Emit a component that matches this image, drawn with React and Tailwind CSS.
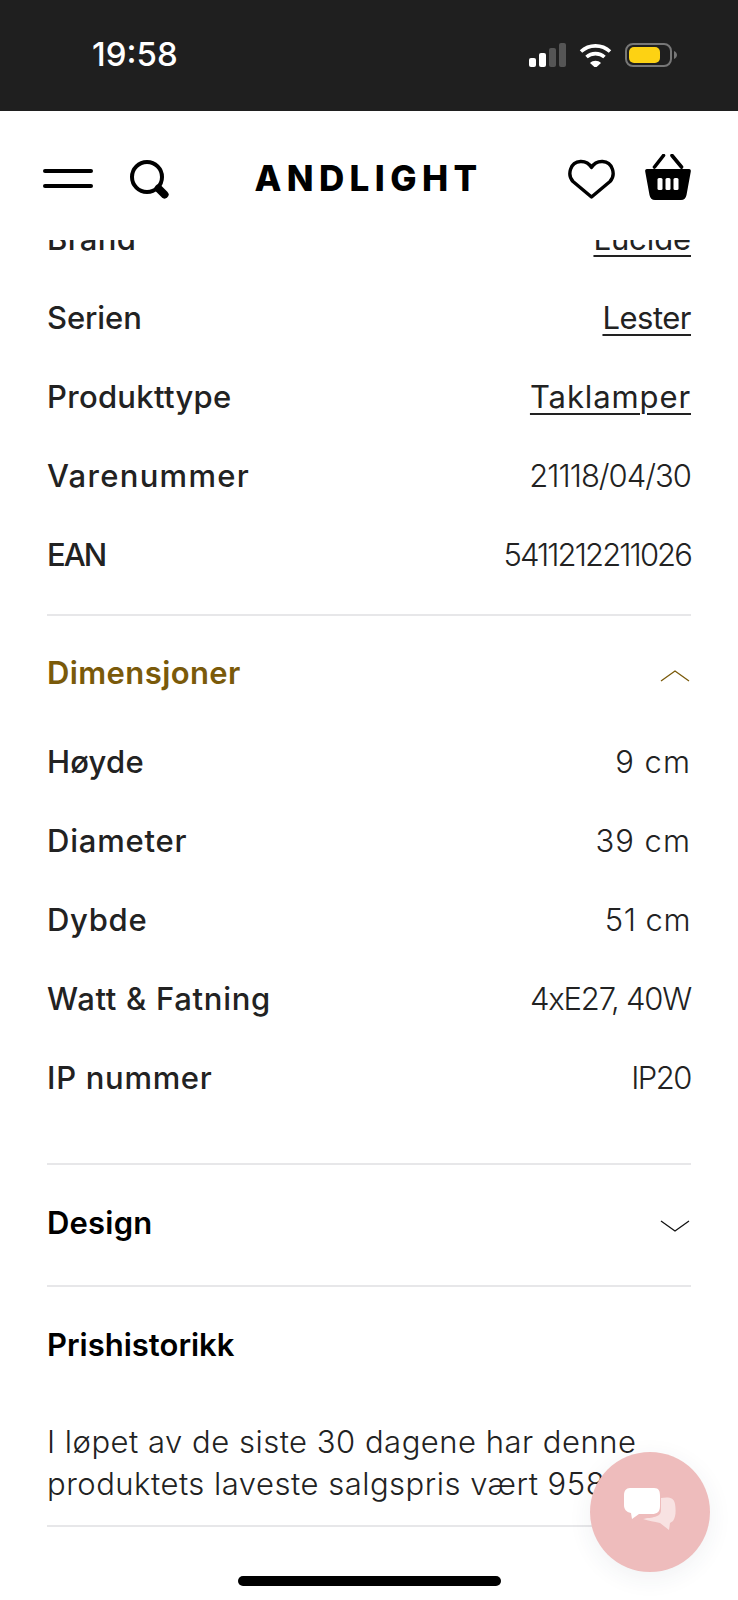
const font = { fontFamily: "Inter, 'Liberation Sans', sans-serif" };

const productRows = [
  { label: "Brand", value: "Lucide", link: "tracking-[-0.1px]", labelTrack: "tracking-[0.3px]" },
  { label: "Serien", value: "Lester", link: "tracking-[-0.5px]", labelTrack: "tracking-[-0.1px]" },
  { label: "Produkttype", value: "Taklamper", link: "tracking-[0.9px]", labelTrack: "tracking-[0.3px]" },
  { label: "Varenummer", value: "21118/04/30", tight: "tracking-[-1px]", labelTrack: "tracking-[1.3px]" },
  { label: "EAN", value: "5411212211026", tight: "tracking-[-1.9px]", labelTrack: "tracking-[-2px]" },
];

const dimensionRows = [
  { label: "Høyde", value: "9 cm", tight: "tracking-[1px]", labelTrack: "tracking-[0.2px]" },
  { label: "Diameter", value: "39 cm", tight: "tracking-[1px]", labelTrack: "tracking-[0.8px]" },
  { label: "Dybde", value: "51 cm", tight: "tracking-[0.5px]", labelTrack: "tracking-[0.7px]" },
  { label: "Watt & Fatning", value: "4xE27, 40W", tight: "tracking-[-1.2px]", labelTrack: "tracking-[0.7px]" },
  { label: "IP nummer", value: "IP20", tight: "tracking-[-1.5px]", labelTrack: "tracking-[0.7px]" },
];

function Row({ label, value, link, tight, labelTrack }) {
  return (
    <div className="flex h-[79px] items-center justify-between text-[31px] text-[#222222]">
      <span className={`font-medium ${labelTrack}`}>{label}</span>
      {link ? (
        <span className={`font-normal underline decoration-2 underline-offset-[5px] ${link}`}>{value}</span>
      ) : (
        <span className={`font-light ${tight}`}>{value}</span>
      )}
    </div>
  );
}

function Chevron({ up, color }) {
  return (
    <svg className="mt-[5px]" width="32" height="16" viewBox="0 0 32 16" fill="none" stroke={color} strokeWidth="1.3">
      <path d={up ? "M2 13 L16 3 L30 13" : "M2 3 L16 13 L30 3"} />
    </svg>
  );
}

function StatusBar() {
  return (
    <div className="flex h-[111px] items-center justify-between bg-[#1f1f1f] pb-[2px] pl-[92px] pr-[61px]">
      <span className="text-[33px] font-medium leading-none text-white">19:58</span>
      <div className="flex items-center gap-[13px]">
        <svg width="37" height="24" viewBox="0 0 37 24">
          <rect x="0" y="15" width="7" height="9" rx="2" fill="#fff" />
          <rect x="10" y="10" width="7" height="14" rx="2" fill="#fff" />
          <rect x="20" y="5" width="7" height="19" rx="2" fill="#555" />
          <rect x="30" y="0" width="7" height="24" rx="2" fill="#555" />
        </svg>
        <svg width="33" height="24" viewBox="0 0 33 24" fill="none" stroke="#fff" strokeWidth="3.6">
          <path d="M2 8.5 C10 1 23 1 31 8.5" />
          <path d="M7.5 14 C12.5 9.5 20.5 9.5 25.5 14" />
          <path d="M11 20 L16.5 25 L22 20 C19 17 14 17 11 20 Z" fill="#fff" strokeWidth="0" />
        </svg>
        <svg width="52" height="24" viewBox="0 0 52 24">
          <rect x="1" y="1" width="45" height="22" rx="7" fill="none" stroke="#777" strokeWidth="2" />
          <rect x="4" y="4" width="31" height="16" rx="5" fill="#fdd213" />
          <path d="M49 8 C51 9 52 10.5 52 12 C52 13.5 51 15 49 16 Z" fill="#777" />
        </svg>
      </div>
    </div>
  );
}

function SiteHeader() {
  return (
    <header className="relative z-10 flex h-[129px] items-center justify-between bg-white pl-[43px] pr-[47px] pt-[6px]">
      <div className="flex items-center gap-[36px]">
        <svg width="50" height="22" viewBox="0 0 50 22" stroke="#000" strokeWidth="4" strokeLinecap="round">
          <path d="M2 3 H48" />
          <path d="M2 18 H48" />
        </svg>
        <svg width="40" height="40" viewBox="0 0 40 40" fill="none" stroke="#000">
          <circle cx="18" cy="18" r="15" strokeWidth="4" />
          <path d="M29.5 29.5 L35.5 35.5" strokeWidth="8" strokeLinecap="round" />
        </svg>
      </div>
      <span className="text-[35px] font-extrabold tracking-[5.4px] text-black">ANDLIGHT</span>
      <div className="flex items-center gap-[30px]">
        <svg width="47" height="40" viewBox="0 0 47 40" fill="none" stroke="#000" strokeWidth="3.4" strokeLinejoin="round">
          <path d="M23.5 38 L5 22.5 C-1 16 2 3 12.5 2.5 C17.5 2.3 21.5 5 23.5 8.5 C25.5 5 29.5 2.3 34.5 2.5 C45 3 48 16 42 22.5 Z" />
        </svg>
        <svg className="-mt-[3px]" width="46" height="46" viewBox="0 0 46 46">
          <path d="M18.5 1.5 L9.5 13 M27 1.5 L36.5 13" stroke="#000" strokeWidth="3.6" strokeLinecap="round" fill="none" />
          <path d="M2 15 H44 C45.5 15 46 16 45.8 17.5 L41.5 41 C41 44 39 46 36 46 H10 C7 46 5 44 4.5 41 L0.2 17.5 C0 16 0.5 15 2 15 Z" fill="#000" />
          <rect x="12.5" y="24" width="5" height="12" rx="1.5" fill="#fff" />
          <rect x="20.5" y="24" width="5" height="12" rx="1.5" fill="#fff" />
          <rect x="28.5" y="24" width="5" height="12" rx="1.5" fill="#fff" />
        </svg>
      </div>
    </header>
  );
}

function ChatButton() {
  return (
    <button className="absolute left-[590px] top-[1452px] z-20 flex h-[120px] w-[120px] items-center justify-center rounded-full bg-[#eebcbc] pb-[4px] shadow-[0_6px_24px_rgba(40,50,90,0.07)]">
      <svg width="52" height="44" viewBox="0 0 52 44">
        <path d="M37 10 C44 9 50 9 51 16 C52 22 52 29 49 33 L46 35 L45 42 L36 35 C30 33.5 25 33 19 31 C28 29 37 30 37 22 Z" fill="#f8e2e2" />
        <path d="M6 0 H30 C35 0 36 3 36 8 V18 C36 24 33 26 28 26 H15 L8 31 L7 25 C2 24 0 21 0 17 V7 C0 3 2 0 6 0 Z" fill="#fff" />
      </svg>
    </button>
  );
}

export default function App() {
  return (
    <div className="relative h-[1600px] w-[738px] overflow-hidden bg-white" style={font}>
      <StatusBar />
      <SiteHeader />
      <main className="h-[1360px] overflow-hidden px-[47px]">
        <div className="-mt-[40px]">
          {productRows.map((row) => (
            <Row key={row.label} {...row} />
          ))}
        </div>
        <div className="mt-[19px] border-t-2 border-[#e7e7e9]">
          <div className="flex h-[114px] items-center justify-between">
            <span className="text-[31px] font-semibold tracking-[0.4px] text-[#7a5a0a]">Dimensjoner</span>
            <Chevron up color="#7a5a0a" />
          </div>
          <div className="-mt-[7px]">
            {dimensionRows.map((row) => (
              <Row key={row.label} {...row} />
            ))}
          </div>
        </div>
        <div className="mt-[45px] border-t-2 border-[#e7e7e9]">
          <div className="flex h-[120px] items-center justify-between pb-[4px]">
            <span className="text-[31px] font-semibold tracking-[0.2px] text-black">Design</span>
            <Chevron color="#111111" />
          </div>
        </div>
        <div className="border-t-2 border-[#e7e7e9] pb-[20px]">
          <div className="flex h-[116px] items-center">
            <span className="text-[31px] font-semibold text-black">Prishistorikk</span>
          </div>
          <p className="mt-[18px] whitespace-nowrap text-[31px] font-light leading-[42px] tracking-[0.5px] text-[#222222]">
            I løpet av de siste 30 dagene har denne
            <br />
            produktets laveste salgspris vært 958 kr.
          </p>
        </div>
        <div className="border-t-2 border-[#e7e7e9]" />
      </main>
      <ChatButton />
      <div className="absolute bottom-[14px] left-[238px] h-[10px] w-[263px] rounded-full bg-black" />
    </div>
  );
}
